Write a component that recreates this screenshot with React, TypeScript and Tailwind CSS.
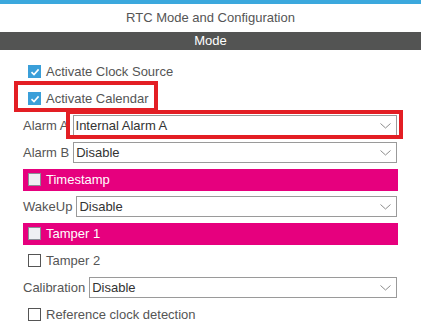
import type { ReactNode } from "react";

const font = { fontFamily: '"Liberation Sans", Arial, sans-serif' };

function CheckedBox() {
  return (
    <span className="flex h-[13px] w-[13px] items-center justify-center bg-[#3a9fd9]">
      <svg width="10" height="10" viewBox="0 0 10 10">
        <path d="M1.5 5.2 L4 7.6 L8.6 2.4" fill="none" stroke="#fff" strokeWidth="1.6" />
      </svg>
    </span>
  );
}

function EmptyBox({ light }: { light?: boolean }) {
  return (
    <span
      className={
        light
          ? "h-[13px] w-[13px] border border-[#8a8f96] bg-[#eef0f3]"
          : "h-[13px] w-[13px] border border-[#555] bg-white"
      }
    />
  );
}

function CheckRow({ children, checked }: { children: ReactNode; checked?: boolean }) {
  return (
    <div className="flex h-[27px] items-center gap-[5px] pl-[5px] text-[13px] text-[#555]">
      {checked ? <CheckedBox /> : <EmptyBox />}
      <span>{children}</span>
    </div>
  );
}

function SelectRow({ label, value }: { label: string; value: string }) {
  return (
    <div className="flex h-[27px] items-center gap-[4px] text-[13px]">
      <span className="text-[#555]">{label}</span>
      <div className="mr-px flex h-[21px] flex-1 items-center justify-between border border-[#9a9a9a] bg-white pl-[2px] pr-[5px] text-[#333]">
        <span>{value}</span>
        <svg width="11" height="6" viewBox="0 0 11 6">
          <path d="M0.5 0.5 L5.5 5 L10.5 0.5" fill="none" stroke="#8c8c8c" strokeWidth="1" />
        </svg>
      </div>
    </div>
  );
}

function PinkBar({ children }: { children: ReactNode }) {
  return (
    <div className="flex h-[27px] items-center">
      <div className="flex h-[22px] w-full items-center gap-[5px] bg-[#e6007e] pl-[5px] text-[13px] text-white">
        <EmptyBox light />
        <span>{children}</span>
      </div>
    </div>
  );
}

export default function App() {
  return (
    <div className="relative h-[329px] w-[421px] overflow-hidden bg-white" style={font}>
      <div className="h-[4px] bg-[#3ba8dd]" />
      <div className="flex h-[28px] items-center justify-center text-[13px] text-[#555]">
        RTC Mode and Configuration
      </div>
      <div className="flex h-[18px] items-center justify-center bg-[#535453] text-[13px] text-white">
        Mode
      </div>
      <div className="flex flex-col px-[23px] pt-[8px]">
        <CheckRow checked>Activate Clock Source</CheckRow>
        <CheckRow checked>Activate Calendar</CheckRow>
        <SelectRow label="Alarm A" value="Internal Alarm A" />
        <SelectRow label="Alarm B" value="Disable" />
        <PinkBar>Timestamp</PinkBar>
        <SelectRow label="WakeUp" value="Disable" />
        <PinkBar>Tamper 1</PinkBar>
        <CheckRow>Tamper 2</CheckRow>
        <SelectRow label="Calibration" value="Disable" />
        <CheckRow>Reference clock detection</CheckRow>
      </div>
      {/* highlight boxes */}
      <div className="absolute left-[14px] top-[81px] h-[31px] w-[144px] border-[4px] border-[#e31e24]" />
      <div className="absolute left-[66px] top-[110px] h-[29px] w-[337px] border-[4px] border-[#e31e24]" />
    </div>
  );
}
